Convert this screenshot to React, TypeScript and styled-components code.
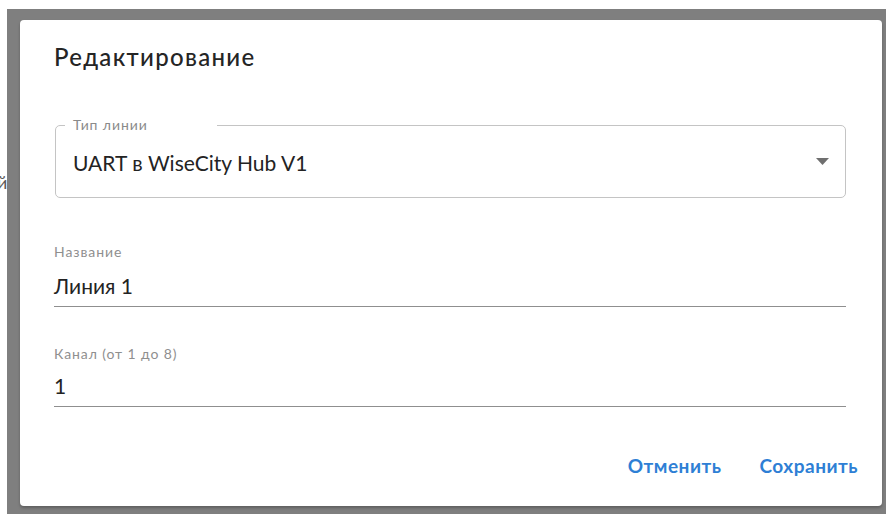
import React from "react";
import styled, { createGlobalStyle } from "styled-components";

const GlobalStyle = createGlobalStyle`
  html, body {
    margin: 0;
    padding: 0;
    background: #ffffff;
    font-family: Lato, "Open Sans", "Noto Sans", sans-serif;
  }
  #root {
    width: 886px;
    height: 514px;
    overflow: hidden;
  }
`;

const Page = styled.div`
  position: relative;
  width: 886px;
  height: 514px;
  padding: 9px 0 0 7px;
  box-sizing: border-box;
`;

// tail of a page label that peeks out from under the backdrop
const PageText = styled.span`
  position: absolute;
  left: -3px;
  top: 170px;
  font-size: 18px;
  line-height: 24px;
  color: #5a5a5a;
`;

const Backdrop = styled.div`
  display: flex;
  width: 100%;
  height: 100%;
  box-sizing: border-box;
  padding: 11px 4px 8px 13px;
  background: #7f7f7f;
`;

const Dialog = styled.section`
  display: flex;
  flex-direction: column;
  width: 862px;
  height: 486px;
  box-sizing: border-box;
  padding: 21px 36px 0 34px;
  background: #ffffff;
  border-radius: 4px;
  box-shadow: 0 2px 3px rgba(0, 0, 0, 0.25);
`;

const Title = styled.h2`
  margin: 0;
  font-size: 24px;
  line-height: 32px;
  font-weight: 500;
  letter-spacing: 1.3px;
  color: #252525;
`;

const SelectBox = styled.div`
  position: relative;
  display: flex;
  align-items: center;
  margin: 52px 0 0 1px;
  height: 73px;
  box-sizing: border-box;
  padding: 0 16px 0 17px;
  border: 1px solid #c4c4c4;
  border-radius: 5px;
`;

const SelectLabel = styled.span`
  position: absolute;
  left: 9px;
  top: -9px;
  width: 136px;
  padding: 0 8px;
  background: #ffffff;
  font-size: 14px;
  line-height: 16px;
  letter-spacing: 0.9px;
  color: #8a8a8a;
`;

const SelectValue = styled.span`
  flex: 1;
  font-size: 21px;
  line-height: 28px;
  color: #232323;
  margin-top: 3px;
`;

const Arrow = styled.svg`
  width: 13px;
  height: 7px;
  flex-shrink: 0;
`;

const Field = styled.div<{ $gap: number }>`
  display: flex;
  flex-direction: column;
  margin-top: ${(p) => p.$gap}px;
  border-bottom: 1px solid #8f8f8f;
  padding-bottom: 6px;
`;

const FieldLabel = styled.label`
  font-size: 14px;
  line-height: 16px;
  letter-spacing: 0.9px;
  color: #8f8f8f;
`;

const FieldValue = styled.span<{ $gap: number }>`
  margin-top: ${(p) => p.$gap}px;
  font-size: 21px;
  line-height: 28px;
  color: #232323;
`;

const Actions = styled.div`
  display: flex;
  justify-content: flex-end;
  gap: 38px;
  margin: auto -12px 29px 0;
`;

const TextButton = styled.button`
  border: 0;
  padding: 0;
  background: none;
  font-family: inherit;
  font-size: 19px;
  line-height: 22px;
  font-weight: 700;
  letter-spacing: 0.5px;
  color: #2e7fd5;
  cursor: pointer;
`;

export default function App() {
  return (
    <>
      <GlobalStyle />
      <Page>
        <PageText>й</PageText>
        <Backdrop>
          <Dialog>
            <Title>Редактирование</Title>
            <SelectBox>
              <SelectLabel>Тип линии</SelectLabel>
              <SelectValue>UART в WiseCity Hub V1</SelectValue>
              <Arrow viewBox="0 0 13 7">
                <path d="M0 0h13L6.5 7z" fill="#6f6f6f" />
              </Arrow>
            </SelectBox>
            <Field $gap={46}>
              <FieldLabel>Название</FieldLabel>
              <FieldValue $gap={12}>Линия 1</FieldValue>
            </Field>
            <Field $gap={39}>
              <FieldLabel>Канал (от 1 до 8)</FieldLabel>
              <FieldValue $gap={10}>1</FieldValue>
            </Field>
            <Actions>
              <TextButton>Отменить</TextButton>
              <TextButton>Сохранить</TextButton>
            </Actions>
          </Dialog>
        </Backdrop>
      </Page>
    </>
  );
}
